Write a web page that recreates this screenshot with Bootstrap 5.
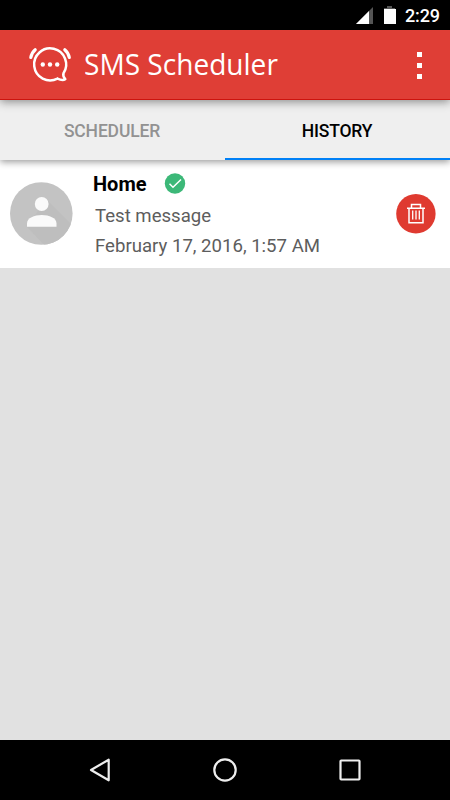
<!DOCTYPE html>
<html lang="en">
<head>
<meta charset="utf-8">
<meta name="viewport" content="width=device-width, initial-scale=1">
<title>SMS Scheduler</title>
<link href="https://cdn.jsdelivr.net/npm/bootstrap@5.3.0/dist/css/bootstrap.min.css" rel="stylesheet">
<style>
body{font-family:Roboto,"Liberation Sans",sans-serif;background:#e1e1e1;height:800px;overflow:hidden;color:#000}
svg{display:block;flex:none}
.status-strip{height:30px;padding-right:10px}
.clock-text{font-size:18px;line-height:30px;font-weight:500;margin-left:7px;padding-top:2px;letter-spacing:-.1px;color:#fff}
.app-header{height:70px;background:#df3e36;border-bottom:1px solid #cc140e;padding:0 22px 0 28px;box-shadow:0 2px 9px rgba(0,0,0,.42);z-index:3}
.app-title{font-family:"Open Sans","Noto Sans",sans-serif;font-size:29px;line-height:40px;padding-bottom:2px;color:#fff;margin-left:12px;transform:scaleX(.968);transform-origin:left center;white-space:nowrap}
.bubble-logo{margin-bottom:1px}
.tab-strip{height:60px;background:#efefef;box-shadow:0 2px 7px rgba(0,0,0,.4);z-index:2}
.tab-strip a{font-size:17.500px;letter-spacing:-.15px;font-weight:500;color:#929292;text-decoration:none;border-bottom:2px solid transparent;padding:4px 1px 0 0}
.tab-strip a.current{color:#000;border-color:#0080f6}
.tab-strip a{margin-bottom:0}
.entry{height:108px;padding:0 14px 0 10px}
.entry-body{margin-left:20px;padding-top:10px}
.entry-name{font-size:20px;line-height:28px;font-weight:700}
.entry-lines{padding:3px 0 0 2px}
.entry-line{font-size:18.600px;line-height:30px;color:#5d5d5d;white-space:nowrap}
.soft-keys{height:60px;padding:0 87px}
</style>
<script src="https://cdn.jsdelivr.net/npm/bootstrap@5.3.0/dist/js/bootstrap.bundle.min.js"></script>
</head>
<body class="d-flex flex-column">
<div class="status-strip bg-black d-flex align-items-center justify-content-end">
  <svg width="42" height="20" viewBox="0 0 42 20"><path d="M0 19 17 2v17z" fill="#555"/><path d="M0 19 13 6v13z" fill="#fff"/><path d="M31 1h5v2h3v2H28V3h3z" fill="#555"/><path d="M28 4h12v15H28z" fill="#fff"/></svg>
  <span class="clock-text">2:29</span>
</div>
<header class="app-header position-relative d-flex align-items-center">
  <svg class="bubble-logo" width="44" height="40" viewBox="28 44 44 40" fill="none" stroke="#fff" stroke-linecap="round" stroke-linejoin="round"><path d="M57.500 78.600A16 16 0 1 1 63.500 73.200C62.800 75.500 63.700 77.500 65.300 79.200C63.500 80.300 60.500 80 57.500 78.600" stroke-width="2.500"/><path d="M30.800 57.500Q31.800 52.500 35.200 49.700M64.800 49.700Q68.200 52.500 69.300 57.500" stroke-width="3.200"/><g fill="#fff" stroke="none"><circle cx="42.800" cy="64.500" r="2.200"/><circle cx="50" cy="64.500" r="2.200"/><circle cx="57.200" cy="64.500" r="2.200"/></g></svg>
  <h1 class="app-title mb-0 fw-normal">SMS Scheduler</h1>
  <svg class="ms-auto" width="16" height="36" viewBox="0 0 16 36"><path d="M5 5h5v5H5zM5 16h5v5H5zM5 27h5v5H5z" fill="#fff"/></svg>
</header>
<nav class="tab-strip position-relative d-flex">
  <a href="#" class="w-50 d-flex align-items-center justify-content-center">SCHEDULER</a>
  <a href="#" class="current w-50 d-flex align-items-center justify-content-center">HISTORY</a>
</nav>
<main class="flex-grow-1">
  <article class="entry bg-white d-flex align-items-center">
    <svg width="63" height="64" viewBox="10 182 63 64"><defs><clipPath id="disc"><circle cx="41.300" cy="213.500" r="31.300"/></clipPath></defs><circle cx="41.300" cy="213.500" r="31.300" fill="#c3c3c3"/><path clip-path="url(#disc)" d="M46 199 76 229V250H49L27 227Z" fill="#bebebe"/><circle cx="41.700" cy="204" r="6.900" fill="#fafafa"/><path d="M27 226.800V223.500C27 212 56.500 212 56.500 223.500V226.800Z" fill="#fafafa"/></svg>
    <div class="entry-body align-self-start">
      <div class="d-flex align-items-center">
        <span class="entry-name">Home</span>
        <svg class="ms-3" width="24" height="22" viewBox="0 0 24 22"><circle cx="12" cy="10.500" r="10.200" fill="#3cb878"/><path d="m6.500 10.800 3.500 3.500L18 6.500" fill="none" stroke="#fff" stroke-width="1.500"/></svg>
      </div>
      <div class="entry-lines">
        <div class="entry-line">Test message</div>
        <div class="entry-line">February 17, 2016, 1:57 AM</div>
      </div>
    </div>
    <svg class="ms-auto" width="40" height="40" viewBox="396 194 40 40"><circle cx="415.900" cy="213.800" r="19.700" fill="#df3a30"/><g fill="none" stroke="#fff" stroke-width="1.500"><path d="M407 208.300H425M411.500 208V204.500H420.500V208M409 208.500V222.700H423V208.500"/><path d="M412.700 210.500V219.500M416 210.500V219.500M419.300 210.500V219.500" stroke-width="1.300"/></g></svg>
  </article>
</main>
<footer class="soft-keys bg-black d-flex align-items-center justify-content-between">
  <svg width="26" height="28" viewBox="87 756 26 28"><path d="M91 770 108.700 759.700V780.300Z" fill="none" stroke="#eee" stroke-width="2.200" stroke-linejoin="round"/></svg>
  <svg width="26" height="28" viewBox="212 756 26 28"><circle cx="225" cy="770" r="10.700" fill="none" stroke="#eee" stroke-width="2.200"/></svg>
  <svg width="26" height="28" viewBox="337 756 26 28"><rect x="340.500" y="760.500" width="19" height="19" rx=".7" fill="none" stroke="#eee" stroke-width="2.200"/></svg>
</footer>
</body>
</html>
